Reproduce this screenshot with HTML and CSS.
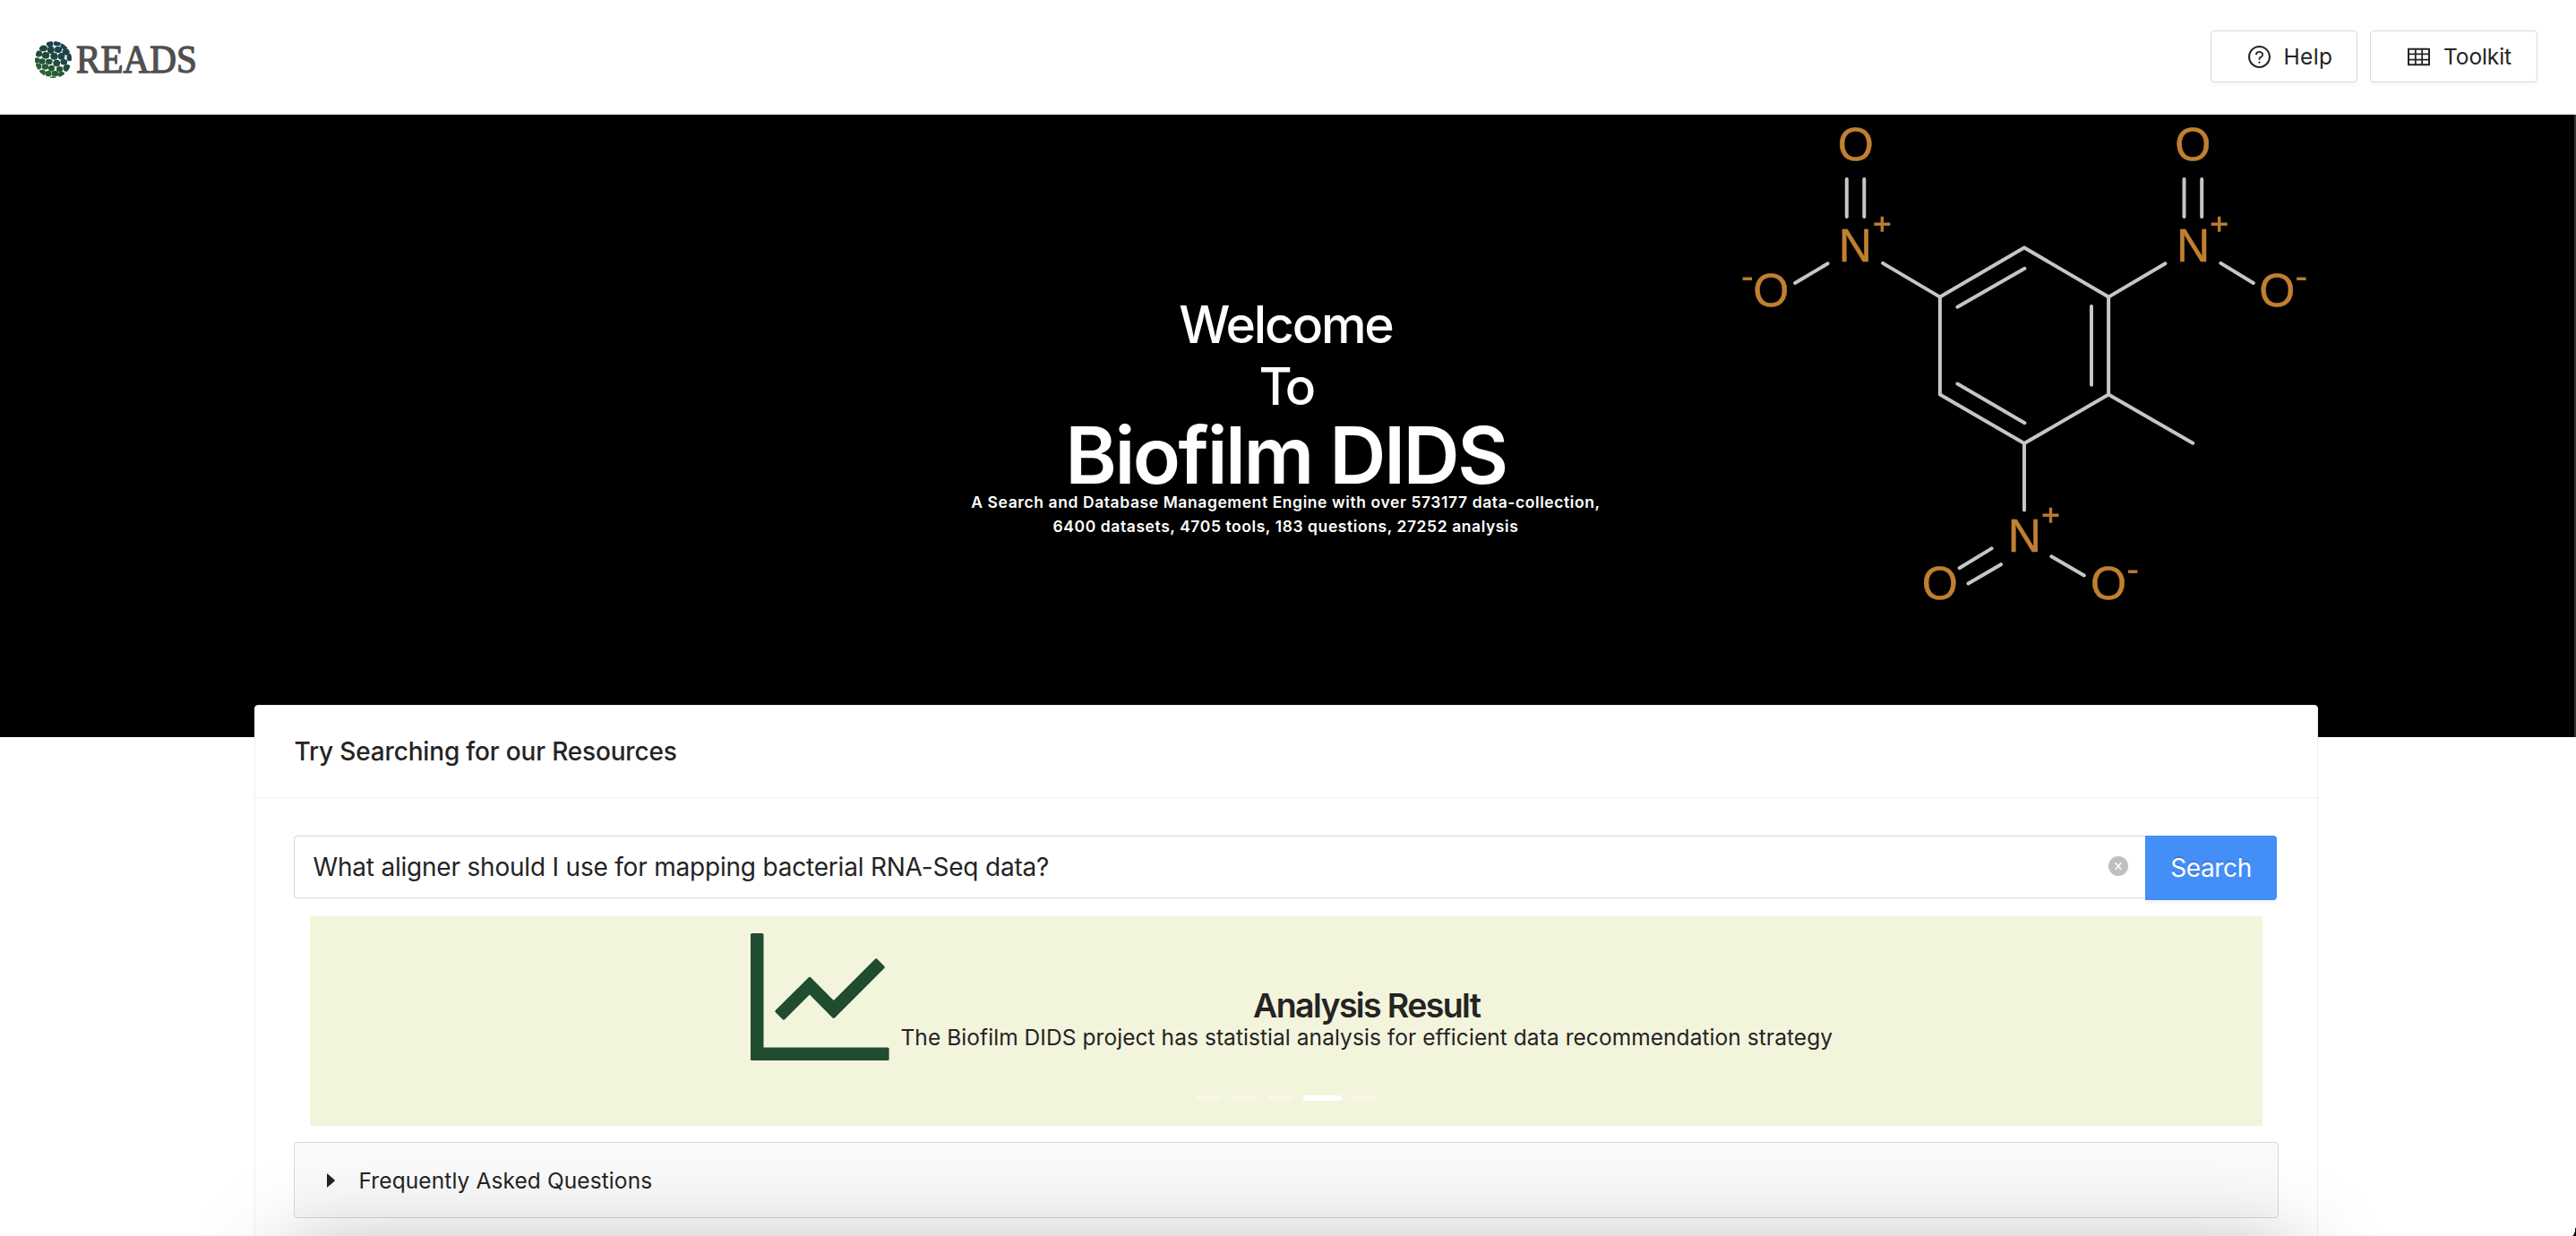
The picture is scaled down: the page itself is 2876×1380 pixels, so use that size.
FILE: index.html
```html
<!DOCTYPE html>
<html lang="en">
<head>
<meta charset="utf-8">
<title>READS - Biofilm DIDS</title>
<link rel="stylesheet" href="styles.css">
</head>
<body>
<div class="page">
  <header class="topbar">
    <a class="logo">
      <svg class="logo-mark" viewBox="14 18 122 122">
        <defs>
          <linearGradient id="globe" gradientUnits="userSpaceOnUse" x1="110" y1="25" x2="50" y2="138">
            <stop offset="0" stop-color="#1a3d52"/>
            <stop offset=".5" stop-color="#1d4a3c"/>
            <stop offset="1" stop-color="#2f6b2c"/>
          </linearGradient>
          <clipPath id="disc"><circle cx="75" cy="79" r="61"/></clipPath>
        </defs>
        <g class="cells" fill="url(#globe)" stroke="url(#globe)" clip-path="url(#disc)">
          <ellipse cx="64" cy="27" rx="10" ry="8"/><ellipse cx="88" cy="25" rx="10" ry="8"/>
          <ellipse cx="112" cy="34" rx="12" ry="9"/><ellipse cx="42" cy="42" rx="12" ry="9"/>
          <ellipse cx="67" cy="47" rx="10" ry="11"/><ellipse cx="91" cy="46" rx="11" ry="9"/>
          <ellipse cx="117" cy="54" rx="11" ry="9"/><ellipse cx="27" cy="60" rx="10" ry="9"/>
          <ellipse cx="50" cy="65" rx="11" ry="10"/><ellipse cx="78" cy="68" rx="11" ry="10"/>
          <ellipse cx="102" cy="68" rx="10" ry="10"/><ellipse cx="129" cy="72" rx="8" ry="11"/>
          <ellipse cx="21" cy="82" rx="8" ry="8"/><ellipse cx="38" cy="85" rx="9" ry="8"/>
          <ellipse cx="61" cy="86" rx="10" ry="8"/><ellipse cx="86" cy="91" rx="10" ry="10"/>
          <ellipse cx="110" cy="87" rx="10" ry="8"/><ellipse cx="25" cy="102" rx="9" ry="9"/>
          <ellipse cx="48" cy="103" rx="10" ry="8"/><ellipse cx="69" cy="108" rx="9" ry="9"/>
          <ellipse cx="96" cy="111" rx="9" ry="8"/><ellipse cx="120" cy="107" rx="11" ry="10"/>
          <ellipse cx="39" cy="122" rx="9" ry="8"/><ellipse cx="59" cy="126" rx="9" ry="8"/>
          <ellipse cx="81" cy="126" rx="10" ry="8"/><ellipse cx="102" cy="129" rx="9" ry="8"/>
          <ellipse cx="74" cy="141" rx="9" ry="5"/>
        </g>
      </svg>
      <span class="logo-text">READS</span>
    </a>
    <nav class="actions">
      <button class="btn btn-help">
        <svg class="icon" viewBox="64 64 896 896" fill="currentColor">
          <path d="M512 64C264.6 64 64 264.6 64 512s200.600 448 448 448 448-200.600 448-448S759.400 64 512 64zm0 820c-205.400 0-372-166.600-372-372s166.600-372 372-372 372 166.600 372 372-166.600 372-372 372z"/>
          <path d="M623.600 316.700C593.600 290.400 554 276 512 276s-81.600 14.500-111.600 40.700C369.200 344 352 380.700 352 420v7.600c0 4.400 3.600 8 8 8h48c4.400 0 8-3.600 8-8V420c0-44.100 43.100-80 96-80s96 35.900 96 80c0 31.100-22 59.600-56.100 72.700-21.200 8.100-39.200 22.300-52.100 40.900-13.100 19-19.900 41.800-19.900 64.900V620c0 4.400 3.600 8 8 8h48c4.400 0 8-3.600 8-8v-22.700a48.300 48.300 0 0 1 30.900-44.800c59-22.700 97.100-74.700 97.100-132.500.1-39.300-17.100-76-48.300-103.300zM472 732a40 40 0 1 0 80 0 40 40 0 1 0-80 0z"/>
        </svg>
        <span>Help</span>
      </button>
      <button class="btn btn-toolkit">
        <svg class="icon" viewBox="64 64 896 896" fill="currentColor">
          <path d="M928 160H96c-17.700 0-32 14.300-32 32v640c0 17.700 14.300 32 32 32h832c17.700 0 32-14.300 32-32V192c0-17.700-14.300-32-32-32zm-40 208H676V232h212v136zm0 224H676V432h212v160zM412 432h200v160H412V432zm200-64H412V232h200v136zm-476 64h212v160H136V432zm0-200h212v136H136V232zm0 424h212v136H136V656zm276 0h200v136H412V656zm476 136H676V656h212v136z"/>
        </svg>
        <span>Toolkit</span>
      </button>
    </nav>
  </header>

  <section class="hero">
    <svg class="molecule" viewBox="1920 128 680 580">
      <g class="bonds">
        <path d="M2260 276.500 2354.100 331.600V440.400L2260 495.100 2165.900 440.400V331.600Z"/>
        <path d="M2185.400 342.700 2260.400 299.800M2335 342V429.700M2185.400 428.500 2260.400 472.200"/>
        <path d="M2354.100 440.400 2448.200 494.800M2260 495.100V569.500"/>
        <path d="M2165.900 331.600 2102.100 293.900M2040.600 294.300 2004.100 316M2061.800 200V242M2081.300 200V242"/>
        <path d="M2354.100 331.600 2417.400 294.300M2479.400 293.900 2515.800 316M2438.500 200V242M2458.200 200V242"/>
        <path d="M2223.600 612.400 2187.600 634.200M2234 630.200 2197.500 651.600M2290.300 621.300 2326.800 642.400"/>
      </g>
      <g class="atoms">
        <text x="2071.800" y="179">O</text><text x="2071.300" y="292">N</text><text x="1977.200" y="342">O</text>
        <text x="2448.200" y="179">O</text><text x="2448.600" y="292">N</text><text x="2542.300" y="342">O</text>
        <text x="2260.400" y="615.600">N</text><text x="2165.900" y="669.200">O</text><text x="2354.100" y="669.200">O</text>
      </g>
      <g class="charges">
        <path d="M2092.300 250.200h18M2101.300 241.700v17M2468.700 250.200h18M2477.700 241.700v17M2280.500 575.200h18M2289.500 566.700v17"/>
        <path d="M1945.600 311.300h10.400M2564.200 311.300h10.400M2376 638.300h10.400"/>
      </g>
    </svg>
    <div class="hero-copy">
      <h2 class="welcome">Welcome</h2>
      <h2 class="welcome to">To</h2>
      <h1 class="brand">Biofilm DIDS</h1>
      <p class="tagline">A Search and Database Management Engine with over 573177 data-collection,<br>6400 datasets, 4705 tools, 183 questions, 27252 analysis</p>
    </div>
  </section>

  <main class="card">
    <div class="card-head">Try Searching for our Resources</div>
    <div class="card-body">
      <div class="search">
        <div class="field">
          <span class="query">What aligner should I use for mapping bacterial RNA-Seq data?</span>
          <svg class="clear" viewBox="0 0 22 22"><circle cx="11" cy="11" r="11"/><path d="M7.700 7.300 14.300 14.700M14.300 7.300 7.700 14.700"/></svg>
        </div>
        <button class="search-btn">Search</button>
      </div>
      <div class="carousel">
        <div class="slide">
          <svg class="chart" viewBox="128 160 768 704" preserveAspectRatio="none">
            <path d="M888 792H200V168c0-4.400-3.600-8-8-8h-56c-4.400 0-8 3.600-8 8v688c0 4.400 3.600 8 8 8h752c4.400 0 8-3.600 8-8v-56c0-4.400-3.600-8-8-8zM305.800 637.700c3.100 3.100 8.100 3.100 11.300 0l138.300-137.600L583 628.500c3.100 3.100 8.200 3.100 11.300 0l275.400-275.300c3.100-3.100 3.100-8.200 0-11.300l-39.600-39.600c-3.100-3.100-8.200-3.100-11.300 0l-230 229.900L461.400 404c-3.100-3.100-8.200-3.100-11.300 0L266.300 586.700c-3.100 3.100-3.100 8.200 0 11.300l39.500 39.700z"/>
          </svg>
          <div class="slide-copy">
            <h3>Analysis Result</h3>
            <p>The Biofilm DIDS project has statistial analysis for efficient data recommendation strategy</p>
          </div>
        </div>
        <div class="dots"><i></i><i></i><i></i><i class="active"></i><i></i></div>
      </div>
      <div class="faq">
        <svg class="caret" viewBox="0 0 9 16"><path d="M0 .8Q0 0 .7.600L8.500 7.300Q9 8 8.500 8.700L.7 15.400Q0 16 0 15.200Z"/></svg>
        <span>Frequently Asked Questions</span>
      </div>
    </div>
  </main>
  <div class="shade"></div>
  <div class="edge"></div>
  <div class="corner"></div>
</div>
</body>
</html>
```
FILE: styles.css
```css
* { box-sizing: border-box; }

body {
  margin: 0;
  font-family: "Inter", "Liberation Sans", sans-serif;
  color: #242424;
  background: #fff;
}

h1, h2, h3, p { margin: 0; }

.page {
  position: relative;
  height: 1380px;
  overflow: hidden;
}

/* Header */
.topbar {
  display: flex;
  justify-content: space-between;
  align-items: flex-start;
  height: 128px;
  padding: 34px 43px 0 38.500px;
}

.logo {
  display: flex;
  align-items: center;
  gap: 5px;
  height: 41px;
  margin-top: 12px;
}

.logo-mark { width: 41px; height: 41px; }
.cells { stroke-width: 3; }

.logo-text {
  width: 136px;
  font-family: "Liberation Serif", serif;
  font-size: 44.500px;
  font-weight: 400;
  line-height: 41px;
  color: #505050;
  -webkit-text-stroke: 1.300px #505050;
  transform: scaleX(.925);
  transform-origin: left;
}

.actions { display: flex; gap: 14px; }

.btn {
  display: flex;
  align-items: center;
  height: 58px;
  padding: 0 0 0 41px;
  border: 1px solid #d9d9d9;
  border-radius: 4px;
  background: #fff;
  box-shadow: 0 4px 0 rgba(0, 0, 0, .016);
  font: 400 24.500px/1 "Inter", sans-serif;
  color: #242424;
  white-space: nowrap;
}

.btn .icon { width: 25px; height: 25px; margin-right: 14.500px; }
.btn-help { width: 164px; letter-spacing: .4px; }
.btn-toolkit { width: 187px; letter-spacing: -.1px; }
.btn-toolkit .icon { margin-right: 15px; }

/* Hero */
.hero {
  position: relative;
  height: 695px;
  padding: 200.300px 5px 0 0;
  background: #000;
  color: #fff;
  text-align: center;
}

.molecule {
  position: absolute;
  left: 1920px;
  top: 0;
  width: 680px;
  height: 580px;
}

.bonds { fill: none; stroke: #c6c6c6; stroke-width: 4; stroke-linecap: round; stroke-linejoin: round; }
.atoms { fill: #c08030; stroke: #c08030; stroke-width: .5; font: 51.500px "Liberation Sans", sans-serif; text-anchor: middle; }
.charges { fill: none; stroke: #b87a2e; stroke-width: 3.400; }

.welcome { font-size: 57px; font-weight: 500; line-height: 69px; letter-spacing: -2.180px; }
.to { letter-spacing: -3.700px; }
.brand { font-size: 87.500px; font-weight: 600; line-height: 84.800px; letter-spacing: -2.510px; }
.tagline { margin-top: -4.300px; font-size: 17.500px; font-weight: 600; line-height: 27px; letter-spacing: .580px; }

/* Search card */
.card {
  position: relative;
  width: 2304px;
  height: 700px;
  margin: -36px 0 0 284px;
  border: 1px solid #f0f0f0;
  border-radius: 4px;
  background: #fff;
}

.card-head {
  display: flex;
  align-items: center;
  height: 103px;
  padding-left: 43.500px;
  border-bottom: 1px solid #f0f0f0;
  font-size: 28px;
  font-weight: 550;
  letter-spacing: -.170px;
}

.card-body { padding: 42px 43px 0; }

.search { display: flex; align-items: flex-start; width: 2214px; }

.field {
  display: flex;
  flex: 1;
  justify-content: space-between;
  align-items: center;
  height: 70px;
  padding: 0 19px 0 20.500px;
  border: 1px solid #d9d9d9;
  border-right: 0;
  border-radius: 4px 0 0 4px;
}

.query { font-size: 28px; letter-spacing: -.204px; }

.clear { width: 22px; height: 22px; margin-top: -3px; fill: #bfbfbf; stroke: #fff; stroke-width: 1.600; }
.clear circle { stroke: none; }

.search-btn {
  width: 147px;
  height: 72px;
  padding: 0;
  border: 0;
  border-radius: 0 4px 4px 0;
  background: #448ef7;
  box-shadow: 0 4px 0 rgba(0, 0, 0, .03);
  font: 400 28px/1 "Inter", sans-serif;
  letter-spacing: -.370px;
  color: #fff;
  text-shadow: 0 -2px 0 rgba(0, 0, 0, .12);
}

.carousel {
  display: flex;
  flex-direction: column;
  justify-content: space-between;
  width: 2180px;
  height: 234px;
  margin: 18px 0 0 18px;
  padding: 19px 0 28px;
  background: #f3f4dc;
}

.slide {
  display: flex;
  align-items: flex-start;
  gap: 12.500px;
  padding-left: 492.400px;
}

.chart { width: 154.600px; height: 142px; fill: #204c30; }

.slide-copy { margin-top: 61px; text-align: center; white-space: nowrap; }
.slide-copy h3 { font-size: 37.500px; font-weight: 600; line-height: 39px; letter-spacing: -1.628px; }
.slide-copy p { font-size: 24.500px; line-height: 33px; letter-spacing: .060px; }

.dots { display: flex; gap: 10.500px; padding-left: 988.500px; }
.dots i { width: 29.500px; height: 6px; border-radius: 2px; background: #fff; opacity: .25; }
.dots .active { width: 43px; opacity: 1; }

.faq {
  display: flex;
  align-items: center;
  gap: 27px;
  width: 2216px;
  height: 85px;
  margin-top: 18px;
  padding-left: 35.500px;
  border: 1px solid #d9d9d9;
  border-radius: 4px;
  background: #fafafa;
  font-size: 24.500px;
  letter-spacing: .097px;
}

.caret { width: 9px; height: 16px; fill: #242424; }

/* Soft shade rising from the bottom edge */
.shade {
  position: absolute;
  left: 320px;
  top: 1400px;
  width: 2240px;
  height: 200px;
  box-shadow: 0 0 100px rgba(0, 0, 0, .35);
}

.edge {
  position: absolute;
  right: 0;
  top: 128px;
  width: 2px;
  height: 695px;
  background: #333;
}

.corner {
  position: absolute;
  right: 0;
  bottom: 0;
  width: 4px;
  height: 16px;
  background: radial-gradient(ellipse 4px 16px at 0 0, transparent 96%, #000 100%);
}
```
